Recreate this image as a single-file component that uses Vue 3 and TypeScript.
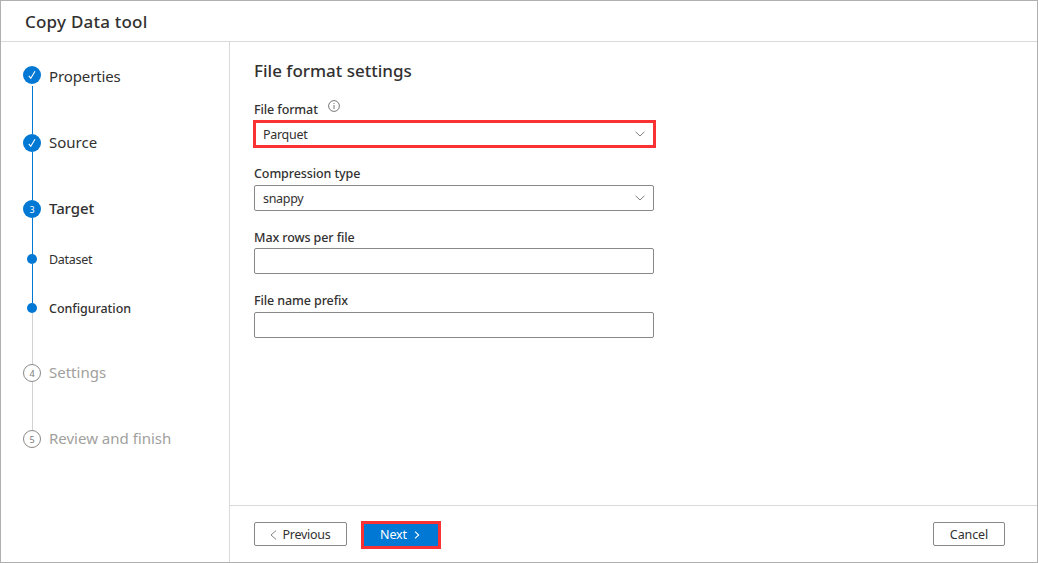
<script setup lang="ts">
import { ref } from 'vue'

interface Step {
  label: string
  key: string
  kind: 'done' | 'current' | 'dot' | 'pending'
  mark?: string
}

interface Field {
  label: string
  key: string
  value: string
  select: boolean
  info?: boolean
}

const steps: Step[] = [
  { label: 'Properties', key: 'properties', kind: 'done' },
  { label: 'Source', key: 'source', kind: 'done' },
  { label: 'Target', key: 'target', kind: 'current', mark: '3' },
  { label: 'Dataset', key: 'dataset', kind: 'dot' },
  { label: 'Configuration', key: 'configuration', kind: 'dot' },
  { label: 'Settings', key: 'settings', kind: 'pending', mark: '4' },
  { label: 'Review and finish', key: 'review', kind: 'pending', mark: '5' },
]

const fields = ref<Field[]>([
  { label: 'File format', key: 'format', value: 'Parquet', select: true, info: true },
  { label: 'Compression type', key: 'compression', value: 'snappy', select: true },
  { label: 'Max rows per file', key: 'maxrows', value: '', select: false },
  { label: 'File name prefix', key: 'prefix', value: '', select: false },
])
</script>

<template>
  <div class="window">
    <header class="header"><h1 class="title">Copy Data tool</h1></header>
    <div class="body">
      <nav class="sidebar">
        <div v-for="step in steps" :key="step.key" class="step" :class="[step.kind, step.key]">
          <div class="rail">
            <span class="marker">
              <svg v-if="step.kind === 'done'" width="18" height="18" viewBox="0 0 18 18">
                <path d="M5.8 9.8 7.8 12.3 12 5.3" fill="none" stroke="#fff" stroke-width="1.1" />
              </svg>
              <template v-else>{{ step.mark }}</template>
            </span>
            <span class="line"></span>
          </div>
          <span class="step-label">{{ step.label }}</span>
        </div>
      </nav>
      <main class="main">
        <section class="form">
          <h2 class="heading">File format settings</h2>
          <div v-for="field in fields" :key="field.key" class="field" :class="field.key">
            <div class="label">
              <span>{{ field.label }}</span>
              <svg v-if="field.info" class="info" width="12" height="12" viewBox="0 0 12 12">
                <circle cx="6" cy="6" r="5.4" fill="none" stroke="#555" stroke-width=".8" />
                <path d="M6 5v4M6 3v1" stroke="#555" stroke-width=".8" />
              </svg>
            </div>
            <div class="control">
              <span class="value">{{ field.value }}</span>
              <svg v-if="field.select" width="10" height="6" viewBox="0 0 10 6">
                <path d="M.6.8 5 5 9.4.8" fill="none" stroke="#707070" stroke-width=".9" />
              </svg>
            </div>
          </div>
        </section>
        <footer class="footer">
          <button class="btn previous">
            <svg width="7" height="10" viewBox="0 0 7 10">
              <path d="M6 .6 1 5l5 4.4" fill="none" stroke="#777" stroke-width=".9" />
            </svg>
            <span>Previous</span>
          </button>
          <button class="btn next">
            <span>Next</span>
            <svg width="6" height="8" viewBox="0 0 6 8">
              <path d="M1 .6 4.7 4 1 7.4" fill="none" stroke="#fff" stroke-width="1.1" />
            </svg>
          </button>
          <button class="btn cancel"><span>Cancel</span></button>
        </footer>
      </main>
    </div>
  </div>
</template>

<style>
body {
  margin: 0;
}
</style>

<style scoped>
.window {
  box-sizing: border-box;
  width: 1038px;
  height: 563px;
  border: 1px solid #b0b0b0;
  display: flex;
  flex-direction: column;
  background: #fff;
  color: #323130;
  font-family: "Noto Sans", "Open Sans", sans-serif;
  font-size: 12.5px;
  white-space: nowrap;
}
.header {
  height: 40px;
  border-bottom: 1px solid #dadada;
  padding-left: 24px;
}
.title,
.heading {
  margin: 0;
  font-weight: 500;
  font-size: 17px;
  line-height: 40px;
}
.title {
  line-height: 42px;
  letter-spacing: 0.22px;
}
.body {
  flex: 1;
  display: flex;
  min-height: 0;
}
.sidebar {
  box-sizing: border-box;
  width: 229px;
  border-right: 1px solid #dadada;
  padding: 24px 0 0 22px;
}
.step {
  display: flex;
  height: 66px;
  gap: 8px;
}
.step.properties { height: 68px; }
.step.target { height: 54px; }
.step.dataset { height: 49px; }
.step.configuration { height: 61px; }
.step.review { height: 18px; }
.rail {
  width: 18px;
  display: flex;
  flex-direction: column;
  align-items: center;
}
.marker {
  box-sizing: border-box;
  width: 18px;
  height: 18px;
  flex: none;
  border-radius: 50%;
  background: #0078d4;
  color: #fff;
  font-size: 9px;
  line-height: 19px;
  text-align: center;
}
.marker svg {
  display: block;
}
.dot .marker {
  width: 10px;
  height: 10px;
}
.pending .marker {
  background: #fff;
  border: 1px solid #8a8886;
  color: #7a7a7a;
  line-height: 17px;
}
.line {
  width: 1px;
  flex: 1;
  margin-left: 1px;
  background: #0078d4;
}
.properties .line { margin-top: 2px; }
.configuration .line,
.settings .line { background: #d2d2d2; }
.review .line { display: none; }
.step-label {
  height: 18px;
  line-height: 16px;
  font-size: 15px;
}
.properties .step-label {
  line-height: 20px;
  letter-spacing: -0.12px;
}
.dot .step-label {
  height: 10px;
  line-height: 12px;
  font-size: 12.5px;
}
.dataset .step-label { letter-spacing: -0.3px; }
.target .step-label { letter-spacing: -0.1px; }
.configuration .step-label { letter-spacing: -0.05px; }
.target .step-label,
.configuration .step-label { font-weight: 500; }
.pending .step-label { color: #a19f9d; }
.main {
  flex: 1;
  display: flex;
  flex-direction: column;
}
.form {
  flex: 1;
  padding: 9px 0 0 24px;
}
.field {
  width: 400px;
}
.label {
  height: 18px;
  line-height: 18px;
  font-weight: 500;
  letter-spacing: -0.1px;
  display: flex;
}
.format .label { padding: 10px 0 1px; }
.compression .label { padding: 17px 0 2px; }
.maxrows .label { padding: 18px 0 1px; }
.prefix .label { padding: 18px 0 2px; }
.info {
  margin: -1px 0 0 10px;
}
.control {
  box-sizing: border-box;
  height: 26px;
  border: 1px solid #8a8886;
  border-radius: 2px;
  padding: 0 8px;
  display: flex;
  align-items: center;
  justify-content: space-between;
}
.value {
  letter-spacing: -0.3px;
}
.format .control {
  width: 403px;
  height: 28px;
  margin-left: -1px;
  border: 3px solid #fb3233;
  border-radius: 0;
  padding: 0 8px 0 7px;
}
.footer {
  box-sizing: border-box;
  height: 57px;
  border-top: 1px solid #dadada;
  padding: 0 32px 0 24px;
  display: flex;
  align-items: center;
}
.btn {
  box-sizing: border-box;
  height: 24px;
  margin: 0;
  padding: 0;
  border: 1px solid #8a8886;
  border-radius: 2px;
  background: #fff;
  color: #323130;
  font: inherit;
  line-height: 20px;
  display: flex;
  align-items: center;
  justify-content: center;
}
.previous,
.cancel {
  padding-top: 1px;
}
.previous {
  width: 93px;
  gap: 5px;
  letter-spacing: -0.25px;
}
.next {
  width: 80px;
  height: 28px;
  margin: 2px 0 0 14px;
  border: 3px solid #fb3233;
  border-radius: 0;
  background: #0078d4;
  color: #fff;
  gap: 7px;
  padding-right: 2px;
  letter-spacing: -0.15px;
}
.next svg {
  margin-bottom: 1px;
}
.cancel {
  width: 72px;
  margin-left: auto;
  letter-spacing: -0.1px;
}
</style>
